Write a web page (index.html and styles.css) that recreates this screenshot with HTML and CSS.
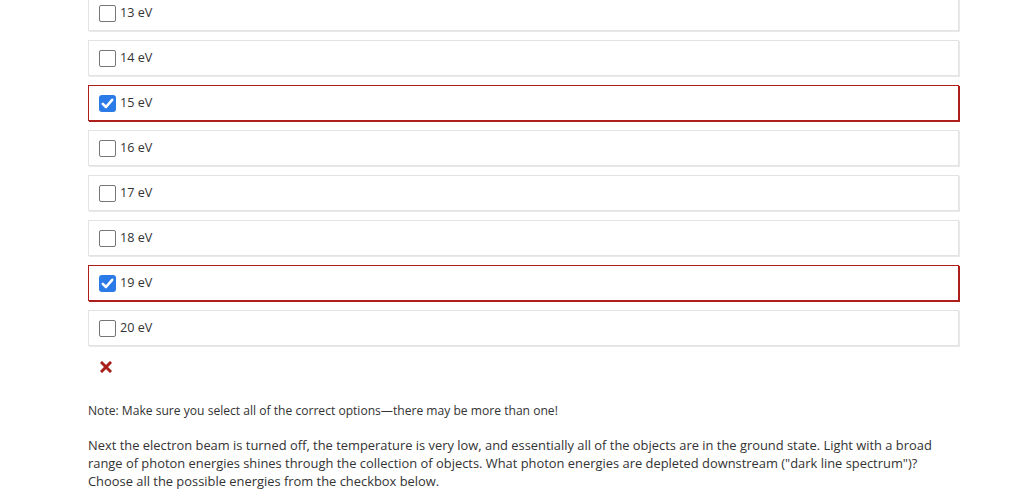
FILE: index.html
```html
<!DOCTYPE html>
<html lang="en">
<head>
  <meta charset="UTF-8">
  <title>Question</title>
  <link rel="stylesheet" href="styles.css">
</head>
<body>
<div class="question">
  <div class="options">
    <label class="option"><span class="box"></span>13 eV</label>
    <label class="option"><span class="box"></span>14 eV</label>
    <label class="option wrong"><span class="box checked"><svg viewBox="0 0 17 17" width="17" height="17"><path d="M3.8 8.8 L7 12 L13.2 4.8" fill="none" stroke="#fff" stroke-width="2.6" stroke-linecap="round" stroke-linejoin="round"/></svg></span>15 eV</label>
    <label class="option"><span class="box"></span>16 eV</label>
    <label class="option"><span class="box"></span>17 eV</label>
    <label class="option"><span class="box"></span>18 eV</label>
    <label class="option wrong"><span class="box checked"><svg viewBox="0 0 17 17" width="17" height="17"><path d="M3.8 8.8 L7 12 L13.2 4.8" fill="none" stroke="#fff" stroke-width="2.6" stroke-linecap="round" stroke-linejoin="round"/></svg></span>19 eV</label>
    <label class="option"><span class="box"></span>20 eV</label>
  </div>
  <div class="result">
    <svg viewBox="0 0 12 12" width="12" height="12"><path d="M2 2 L10 10 M10 2 L2 10" stroke="#a8201a" stroke-width="3" stroke-linecap="square"/></svg>
  </div>
  <p class="note">Note: Make sure you select all of the correct options—there may be more than one!</p>
  <p class="text">Next the electron beam is turned off, the temperature is very low, and essentially all of the objects are in the ground state. Light with a broad range of photon energies shines through the collection of objects. What photon energies are depleted downstream ("dark line spectrum")? Choose all the possible energies from the checkbox below.</p>
</div>
</body>
</html>
```

FILE: styles.css
```css
* {
  box-sizing: border-box;
}
body {
  margin: 0;
  background: #fff;
  font-family: "Open Sans", "Noto Sans", sans-serif;
  font-size: 12px;
  line-height: 18px;
  color: #333;
  overflow: hidden;
}
.question {
  width: 871px;
  margin-left: 88px;
}
.options {
  display: flex;
  flex-direction: column;
  gap: 8px;
  margin-top: -5px;
}
.option {
  display: flex;
  align-items: center;
  height: 36px;
  padding-left: 10px;
  border: 1px solid #e3e3e3;
  box-shadow: 1px 1px 0 #e9e9e9;
  margin-bottom: 1px;
  font-size: 12.6px;
}
.option.wrong {
  border-color: #ae1f1c;
  box-shadow: 1px 1px 0 #ae1f1c;
}
.box {
  width: 17px;
  height: 17px;
  margin-right: 4px;
  border: 1px solid #767676;
  border-radius: 2px;
  background: #fff;
}
.box.checked {
  border: none;
  background: #2a7ae8;
  border-radius: 3px;
}
.box svg {
  display: block;
}
.result {
  margin-top: 14px;
  padding-left: 12px;
  height: 16px;
}
.result svg {
  display: block;
  margin-top: 2px;
}
.note {
  margin: 25px 0 0;
  font-size: 12.1px;
}
.text {
  margin: 16px 0 0;
  font-size: 12.9px;
}
```
